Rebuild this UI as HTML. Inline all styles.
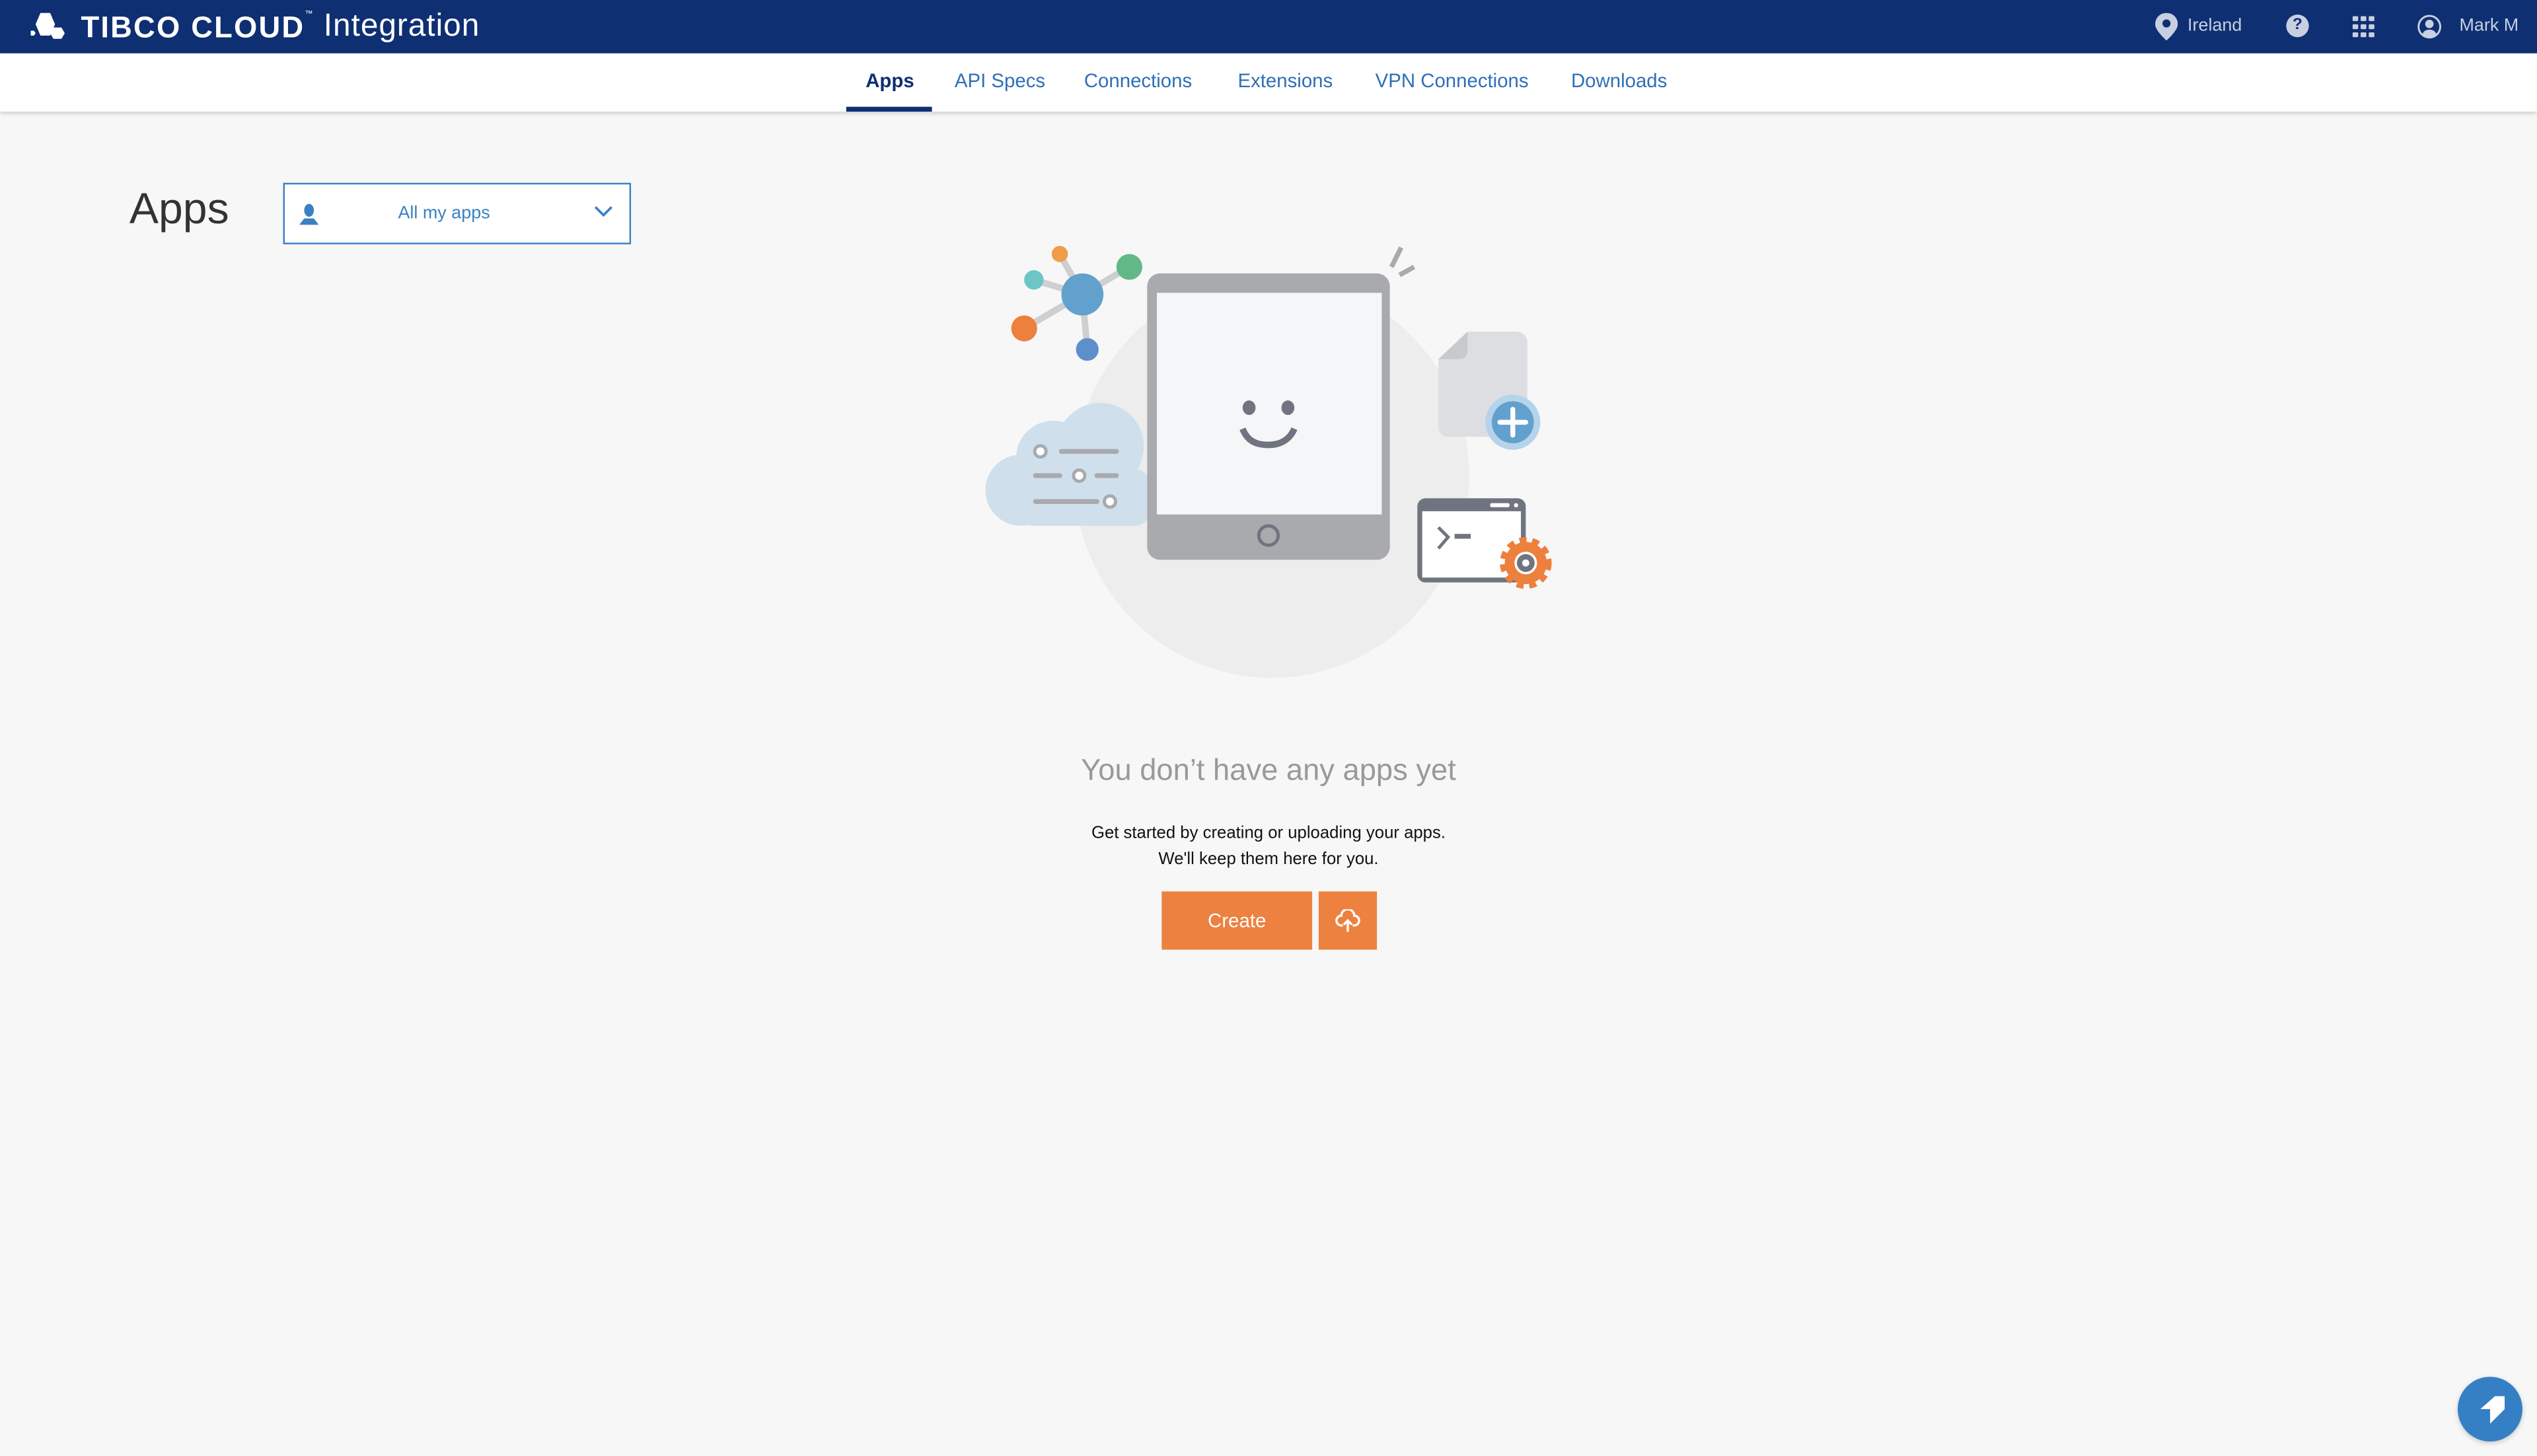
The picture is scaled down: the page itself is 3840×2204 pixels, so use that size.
<!DOCTYPE html>
<html><head><meta charset="utf-8">
<style>
html,body{margin:0;padding:0;width:3840px;height:2204px;overflow:hidden;background:#f7f7f7;}
#w{position:absolute;left:0;top:0;width:1568px;height:900px;transform:scale(2.44898);transform-origin:0 0;font-family:"Liberation Sans",sans-serif;background:#f7f7f7;}
.hdr{position:absolute;left:0;top:0;width:1568px;height:33px;background:#0f2f73;color:#fff;}
.nav{position:absolute;left:0;top:33px;width:1568px;height:36px;background:#fff;box-shadow:0 1px 3px rgba(0,0,0,.2);}
.tab{position:absolute;top:10px;font-size:12px;color:#2f6fb5;white-space:nowrap;}
.abs{position:absolute;}
</style></head><body><div id="w">
<div class="hdr">
 <svg class="abs" style="left:19px;top:7px" width="28" height="18" viewBox="0 0 28 18">
  <polygon points="6,1 12,1 15,8 12,15 6,15 3,8" fill="#fff"/>
  <polygon points="14,10 19,10 21,13.5 19,17 14,17 12,13.5" fill="#fff"/>
  <polygon points="0,12 2,12 3,13.5 2,15 0,15" fill="#fff"/>
  <polygon points="18,3 22,3 24,6 22,9 18,9 16,6" fill="#0f2f73"/>
 </svg>
 <div class="abs" style="left:50px;top:6px;font-size:18.5px;font-weight:bold;letter-spacing:0.9px;white-space:nowrap">TIBCO CLOUD<span style="font-size:5px;vertical-align:top;font-weight:normal">™</span></div>
 <div class="abs" style="left:200px;top:5px;font-size:19.5px;letter-spacing:0.4px;white-space:nowrap">Integration</div>
 <svg class="abs" style="left:1332px;top:8px" width="14" height="17" viewBox="0 0 14 17"><path d="M7 0C3 0 0 3 0 7c0 4 7 10 7 10s7-6 7-10c0-4-3-7-7-7z" fill="#c8cfe0"/><circle cx="7" cy="6.5" r="2.5" fill="#0f2f73"/></svg>
 <div class="abs" style="left:1352px;top:10px;font-size:11px;color:#c8cfe0">Ireland</div>
 <div class="abs" style="left:1413px;top:9px;width:14px;height:14px;border-radius:50%;background:#c8cfe0;color:#0f2f73;font-size:10px;font-weight:bold;text-align:center;line-height:14px">?</div>
 <svg class="abs" style="left:1454px;top:10px" width="14" height="13" viewBox="0 0 14 13" fill="#c8cfe0">
  <rect x="0" y="0" width="3.5" height="3" rx=".6"/><rect x="5" y="0" width="3.5" height="3" rx=".6"/><rect x="10" y="0" width="3.5" height="3" rx=".6"/>
  <rect x="0" y="5" width="3.5" height="3" rx=".6"/><rect x="5" y="5" width="3.5" height="3" rx=".6"/><rect x="10" y="5" width="3.5" height="3" rx=".6"/>
  <rect x="0" y="10" width="3.5" height="3" rx=".6"/><rect x="5" y="10" width="3.5" height="3" rx=".6"/><rect x="10" y="10" width="3.5" height="3" rx=".6"/>
 </svg>
 <svg class="abs" style="left:1494px;top:9px" width="15" height="15" viewBox="0 0 15 15"><circle cx="7.5" cy="7.5" r="6.7" fill="none" stroke="#c8cfe0" stroke-width="1.2"/><circle cx="7.5" cy="5.8" r="2.6" fill="#c8cfe0"/><path d="M3 12.3c1-2.3 2.6-3 4.5-3s3.5.7 4.5 3c-1.2 1.1-2.7 1.7-4.5 1.7s-3.3-.6-4.5-1.7z" fill="#c8cfe0"/></svg>
 <div class="abs" style="left:1520px;top:10px;font-size:11px;color:#c8cfe0;white-space:nowrap">Mark M</div>
</div>
<div class="nav">
 <div class="tab" style="left:535px;color:#0f2f73;font-weight:bold">Apps</div>
 <div class="abs" style="left:523px;top:33px;width:53px;height:3px;background:#0f2f73"></div>
 <div class="tab" style="left:590px">API Specs</div>
 <div class="tab" style="left:670px">Connections</div>
 <div class="tab" style="left:765px">Extensions</div>
 <div class="tab" style="left:850px">VPN Connections</div>
 <div class="tab" style="left:971px">Downloads</div>
</div>
<div class="abs" style="left:80px;top:114px;font-size:27px;color:#333">Apps</div>
<div class="abs" style="left:175px;top:113px;width:213px;height:36px;border:1px solid #3a80c3;background:#fff;">
 <svg class="abs" style="left:9px;top:12px" width="12" height="13" viewBox="0 0 12 13"><ellipse cx="6" cy="4" rx="3" ry="4" fill="#3a80c3"/><path d="M0 13l3-4h6l3 4z" fill="#3a80c3"/></svg>
 <div class="abs" style="left:70px;top:12px;font-size:11px;color:#3a80c3">All my apps</div>
 <svg class="abs" style="left:191px;top:13px" width="12" height="8" viewBox="0 0 12 8"><path d="M1 1l5 5 5-5" fill="none" stroke="#3a80c3" stroke-width="1.5"/></svg>
</div>
<svg class="abs" style="left:600px;top:145px" width="370" height="280" viewBox="600 145 370 280">
 <ellipse cx="786" cy="295" rx="122" ry="124" fill="#ededed"/>
 <g stroke="#cfcfcf" stroke-width="4">
  <line x1="669" y1="182" x2="655" y2="157"/><line x1="669" y1="182" x2="639" y2="173"/><line x1="669" y1="182" x2="698" y2="165"/><line x1="669" y1="182" x2="633" y2="203"/><line x1="669" y1="182" x2="672" y2="216"/>
 </g>
 <circle cx="669" cy="182" r="13" fill="#62a1cd"/>
 <circle cx="655" cy="157" r="5" fill="#f19c46"/><circle cx="639" cy="173" r="6" fill="#6cc6c6"/><circle cx="698" cy="165" r="8" fill="#63b887"/><circle cx="633" cy="203" r="8" fill="#ed803c"/><circle cx="672" cy="216" r="7" fill="#5d8fca"/>
 <g fill="#cfe0ec">
  <circle cx="631" cy="303" r="22"/>
  <circle cx="651" cy="283" r="23"/>
  <circle cx="680" cy="276" r="27"/>
  <rect x="630" y="290" width="80" height="35" rx="8"/>
 </g>
 <g stroke="#a9aaae" stroke-width="3" stroke-linecap="round" fill="#fff">
  <line x1="656" y1="279" x2="690" y2="279"/><line x1="640" y1="294" x2="655" y2="294"/><line x1="678" y1="294" x2="690" y2="294"/><line x1="640" y1="310" x2="678" y2="310"/>
  <circle cx="643" cy="279" r="3.5" stroke-width="2"/><circle cx="667" cy="294" r="3.5" stroke-width="2"/><circle cx="686" cy="310" r="3.5" stroke-width="2"/>
 </g>
 <rect x="709" y="169" width="150" height="177" rx="8" fill="#a9aaae"/>
 <rect x="715" y="181" width="139" height="137" fill="#f5f6f8"/>
 <circle cx="784" cy="331" r="6" fill="none" stroke="#707480" stroke-width="2"/>
 <ellipse cx="772" cy="252" rx="4" ry="4.5" fill="#707480"/><ellipse cx="796" cy="252" rx="4" ry="4.5" fill="#707480"/>
 <path d="M768 265c3 8 9 10 16 10c7 0 13-3 16-10" fill="none" stroke="#707480" stroke-width="4"/>
 <path d="M860 165l6-12M865 170l9-5" stroke="#a9aaae" stroke-width="3"/>
 <path d="M907 205h30c4 0 7 3 7 7v58h-49c-4 0-6-3-6-6v-42z" fill="#dddee2"/>
 <path d="M889 222l18-17v12c0 3-2 5-5 5z" fill="#c8c9cd"/>
 <circle cx="935" cy="261" r="17" fill="#b5d3ea"/><circle cx="935" cy="261" r="13" fill="#62a1cd"/>
 <path d="M935 253v16M927 261h16" stroke="#fff" stroke-width="3" stroke-linecap="round"/>
 <rect x="876" y="308" width="67" height="52" rx="5" fill="#707480"/>
 <rect x="879" y="316" width="61" height="41" fill="#fff"/>
 <rect x="921" y="311" width="12" height="2.5" rx="1" fill="#fff"/><circle cx="937" cy="312.3" r="1.3" fill="#fff"/>
 <path d="M889 326l6 6-6 7" fill="none" stroke="#707480" stroke-width="2"/><rect x="899" y="330" width="10" height="3" fill="#707480"/>
 <circle cx="943" cy="348" r="13" fill="#ed803c" stroke="#ed803c" stroke-width="6" stroke-dasharray="4 3.2"/>
 <circle cx="943" cy="348" r="11" fill="#ed803c"/>
 <circle cx="943" cy="348" r="7" fill="#fff"/><circle cx="943" cy="348" r="5.5" fill="#707480"/><circle cx="943" cy="348" r="2.2" fill="#fff"/>
</svg>
<div class="abs" style="left:584px;width:400px;top:465px;text-align:center;font-size:18.5px;color:#999">You don’t have any apps yet</div>
<div class="abs" style="left:584px;width:400px;top:507px;text-align:center;font-size:10.5px;color:#111;line-height:16px">Get started by creating or uploading your apps.<br>We'll keep them here for you.</div>
<div class="abs" style="left:718px;top:551px;width:93px;height:36px;background:#ed813f;color:#fff;font-size:12px;text-align:center;line-height:36px">Create</div>
<div class="abs" style="left:815px;top:551px;width:36px;height:36px;background:#ed813f;">
 <svg class="abs" style="left:10px;top:11px" width="16" height="14" viewBox="0 0 16 14"><path d="M5 10H4a3 3 0 0 1 0-6a4 4 0 0 1 8 0a3 3 0 0 1 0 6h-1" fill="none" stroke="#fff" stroke-width="1.4"/><path d="M8 14V7M5.5 9.5L8 7l2.5 2.5" fill="none" stroke="#fff" stroke-width="1.4"/></svg>
</div>
<div class="abs" style="left:1519px;top:851px;width:40px;height:40px;border-radius:50%;background:#3580c4;box-shadow:0 1px 3px rgba(0,0,0,.2)">
 <svg class="abs" style="left:0;top:0" width="40" height="40" viewBox="0 0 40 40"><path d="M14 20l9-8h6v8l-9 9v-9z" fill="#fff"/></svg>
</div>
</div></body></html>
